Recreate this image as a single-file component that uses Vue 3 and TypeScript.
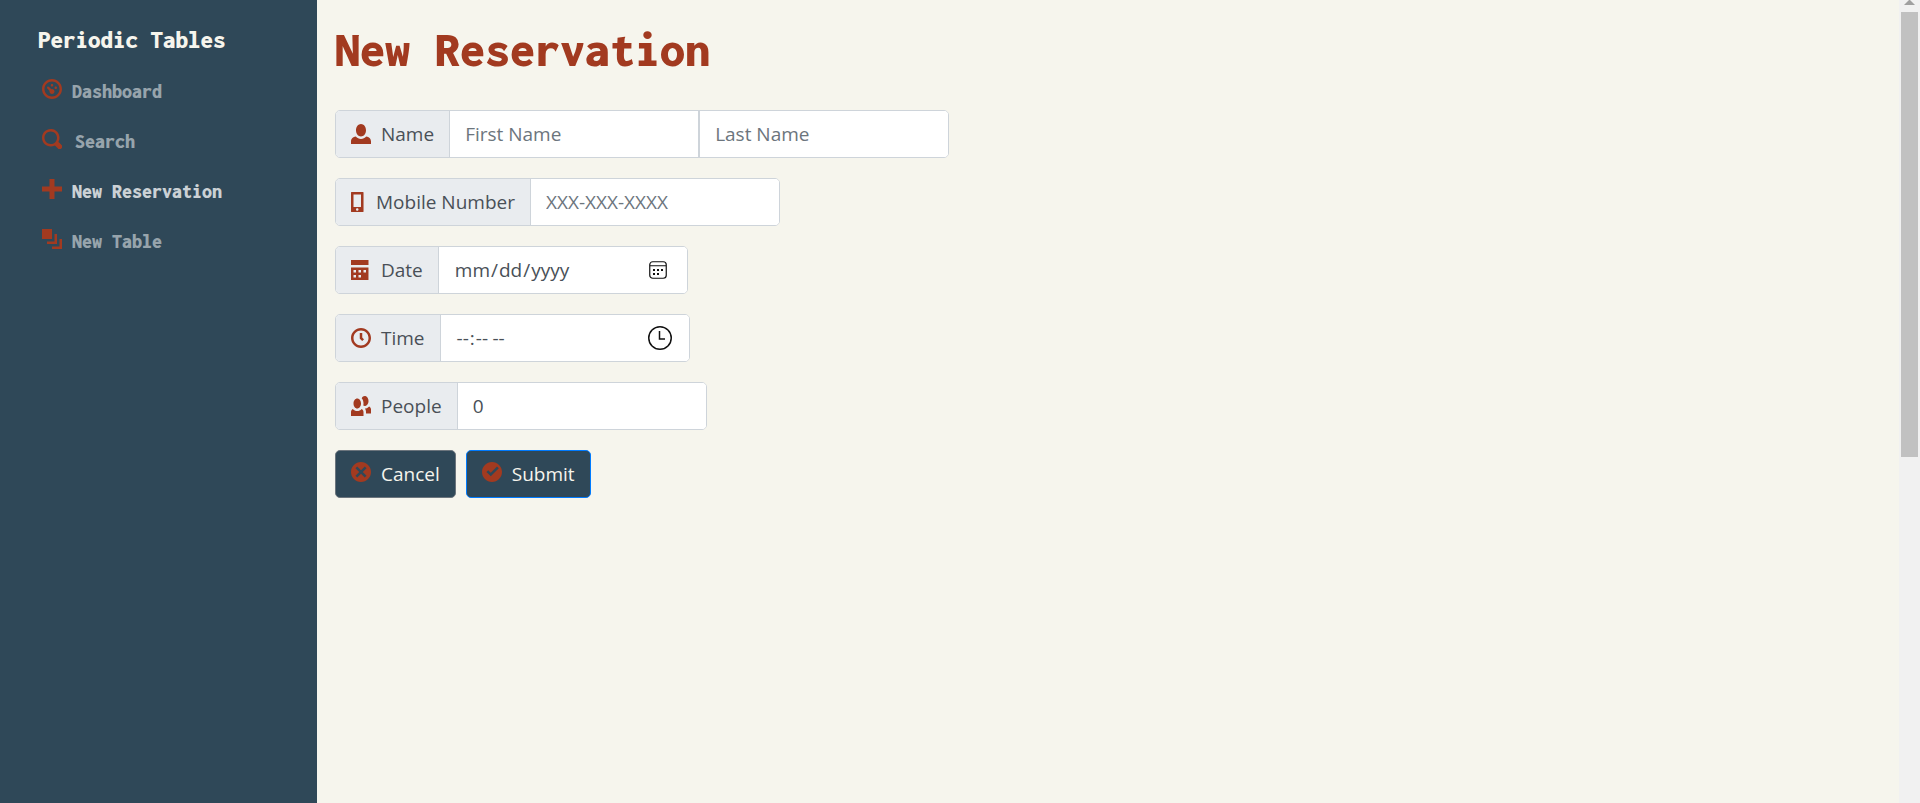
<script setup lang="ts">
import { ref } from 'vue'

type IconName =
  | 'dashboard' | 'search' | 'plus' | 'layers' | 'person' | 'phone'
  | 'calendar' | 'clock' | 'people' | 'cancel' | 'check'

const icons: Record<IconName, string> = {
  dashboard: 'M4 0c-2.2 0-4 1.8-4 4s1.8 4 4 4 4-1.8 4-4-1.8-4-4-4zm0 1c1.66 0 3 1.34 3 3s-1.34 3-3 3-3-1.34-3-3 1.34-3 3-3zm0 1c-.28 0-.5.22-.5.5s.22.5.5.5.5-.22.5-.5-.22-.5-.5-.5zm-1.66 1a.5.5 0 0 0-.19.84l.91.91c-.02.08-.06.16-.06.25 0 .55.45 1 1 1s1-.45 1-1-.45-1-1-1c-.09 0-.17.04-.25.06l-.91-.91a.5.5 0 0 0-.44-.16.5.5 0 0 0-.06 0zm3.16 0c-.28 0-.5.22-.5.5s.22.5.5.5.5-.22.5-.5-.22-.5-.5-.5z',
  search: 'M3.5 0c-1.93 0-3.5 1.57-3.5 3.5s1.57 3.5 3.5 3.5c.59 0 1.17-.14 1.66-.41a1 1 0 0 0 .13.13l1 1a1.02 1.02 0 1 0 1.44-1.44l-1-1a1 1 0 0 0-.16-.13c.27-.49.44-1.06.44-1.66 0-1.93-1.55-3.5-3.5-3.5zm0 1c1.39 0 2.5 1.11 2.5 2.5 0 .66-.24 1.27-.66 1.72-.01.01-.02.02-.03.03a1 1 0 0 0-.13.13c-.44.4-1.04.63-1.69.63-1.39 0-2.5-1.11-2.5-2.5s1.11-2.5 2.5-2.5z',
  plus: 'M3 0v3h-3v2h3v3h2v-3h3v-2h-3v-3h-2z',
  layers: 'M0 0v4h4v-4h-4zm5 2v3h-3v1h4v-4h-1zm2 2v3h-3v1h4v-4h-1z',
  person: 'M4 0c-1.1 0-2 1.12-2 2.5s.9 2.5 2 2.5 2-1.12 2-2.5-.9-2.5-2-2.5zm-2.09 5c-1.06.05-1.91.92-1.91 2v1h8v-1c0-1.08-.84-1.95-1.91-2-.54.61-1.28 1-2.09 1-.81 0-1.55-.39-2.09-1z',
  phone: 'M.19 0c-.11 0-.19.08-.19.19v7.63c0 .11.08.19.19.19h4.63c.11 0 .19-.08.19-.19v-7.63c0-.11-.08-.19-.19-.19h-4.63zm.81 1h3v5h-3v-5zm1.5 5.5c.28 0 .5.22.5.5s-.22.5-.5.5-.5-.22-.5-.5.22-.5.5-.5z',
  calendar: 'M0 0v2h7v-2h-7zm0 3v4.91c0 .05.04.09.09.09h6.81c.05 0 .09-.04.09-.09v-4.91h-7zm1 1h1v1h-1v-1zm2 0h1v1h-1v-1zm2 0h1v1h-1v-1zm-4 2h1v1h-1v-1zm2 0h1v1h-1v-1z',
  clock: 'M4 0c-2.2 0-4 1.8-4 4s1.8 4 4 4 4-1.8 4-4-1.8-4-4-4zm0 1c1.66 0 3 1.34 3 3s-1.34 3-3 3-3-1.34-3-3 1.34-3 3-3zm-.5 1v2.22l.16.13.5.5.34.38.72-.72-.38-.34-.34-.34v-1.81h-1z',
  people: 'M5.5 0c-.51 0-.95.35-1.22.88.45.54.72 1.28.72 2.13 0 .29-.03.55-.09.81.19.11.38.19.59.19.83 0 1.5-.9 1.5-2s-.67-2-1.5-2zm-3 1c-.83 0-1.5.9-1.5 2s.67 2 1.5 2 1.5-.9 1.5-2-.67-2-1.5-2zm4.75 3.16c-.43.51-1.02.82-1.69.84.27.38.44.84.44 1.34v.66h2v-1.66c0-.52-.31-.97-.75-1.19zm-6.5 1c-.44.22-.75.67-.75 1.19v1.66h5v-1.66c0-.52-.31-.97-.75-1.19-.45.53-1.06.84-1.75.84s-1.3-.32-1.75-.84z',
  cancel: 'M4 0c-2.21 0-4 1.79-4 4s1.79 4 4 4 4-1.79 4-4-1.79-4-4-4zm-1.5 1.78l1.5 1.5 1.5-1.5.72.72-1.5 1.5 1.5 1.5-.72.72-1.5-1.5-1.5 1.5-.72-.72 1.5-1.5-1.5-1.5.72-.72z',
  check: 'M4 0c-2.2 0-4 1.8-4 4s1.8 4 4 4 4-1.8 4-4-1.8-4-4-4zm2 1.78l.72.72-3.22 3.22-1.72-1.72.72-.72 1 1 2.5-2.5z',
}

interface NavItem { label: string; icon: IconName; active?: boolean; wide?: boolean }

const navItems: NavItem[] = [
  { label: 'Dashboard', icon: 'dashboard' },
  { label: 'Search', icon: 'search', wide: true },
  { label: 'New Reservation', icon: 'plus', active: true },
  { label: 'New Table', icon: 'layers' },
]

const firstName = ref('')
const lastName = ref('')
const mobile = ref('')
const date = ref('')
const time = ref('')
const people = ref('0')
</script>

<template>
  <div class="page">
    <nav class="sidebar">
      <a class="brand" href="#">Periodic Tables</a>
      <ul class="menu">
        <li v-for="item in navItems" :key="item.label">
          <a class="nav-link" :class="{ active: item.active, wide: item.wide }" href="#">
            <svg class="icon" viewBox="0 0 8 8" aria-hidden="true"><path :d="icons[item.icon]" /></svg>
            <span>{{ item.label }}</span>
          </a>
        </li>
      </ul>
    </nav>

    <main class="content">
      <h1>New Reservation</h1>
      <form class="form" @submit.prevent>
        <div class="group">
          <label class="tag" for="first-name">
            <svg class="icon" viewBox="0 0 8 8" aria-hidden="true"><path :d="icons.person" /></svg>
            Name
          </label>
          <input id="first-name" v-model="firstName" class="field" type="text" placeholder="First Name" />
          <input v-model="lastName" class="field" type="text" placeholder="Last Name" aria-label="Last Name" />
        </div>

        <div class="group">
          <label class="tag" for="mobile">
            <svg class="icon narrow" viewBox="0 0 6 8" aria-hidden="true"><path :d="icons.phone" /></svg>
            Mobile Number
          </label>
          <input id="mobile" v-model="mobile" class="field" type="tel" placeholder="XXX-XXX-XXXX" />
        </div>

        <div class="group">
          <label class="tag" for="date">
            <svg class="icon" viewBox="0 0 8 8" aria-hidden="true"><path :d="icons.calendar" /></svg>
            Date
          </label>
          <div class="field picker">
            <input id="date" v-model="date" type="date" />
            <svg class="picker-icon" viewBox="0 0 24 24" aria-hidden="true">
              <rect x="3.75" y="3.75" width="16.5" height="16.5" rx="3" fill="none" stroke="#111" stroke-width="1.2" />
              <path d="M4 7.75h16" stroke="#111" stroke-width="1.2" />
              <g fill="#111">
                <rect x="11" y="11" width="2" height="2" /><rect x="15" y="11" width="2" height="2" />
                <rect x="7" y="11" width="2" height="2" /><rect x="7" y="15" width="2" height="2" />
                <rect x="11" y="15" width="2" height="2" />
              </g>
            </svg>
          </div>
        </div>

        <div class="group">
          <label class="tag" for="time">
            <svg class="icon" viewBox="0 0 8 8" aria-hidden="true"><path :d="icons.clock" /></svg>
            Time
          </label>
          <div class="field picker">
            <input id="time" v-model="time" type="time" />
            <svg class="picker-icon" viewBox="0 0 24 24" aria-hidden="true">
              <circle cx="12" cy="12" r="11.25" fill="none" stroke="#111" stroke-width="1.5" />
              <path d="M11.5 5v8H17" fill="none" stroke="#111" stroke-width="1.5" />
            </svg>
          </div>
        </div>

        <div class="group">
          <label class="tag" for="people">
            <svg class="icon" viewBox="0 0 8 8" aria-hidden="true"><path :d="icons.people" /></svg>
            People
          </label>
          <input id="people" v-model="people" class="field" type="text" inputmode="numeric" />
        </div>

        <div class="actions">
          <button class="btn" type="button">
            <svg class="icon" viewBox="0 0 8 8" aria-hidden="true"><path :d="icons.cancel" /></svg>
            Cancel
          </button>
          <button class="btn primary" type="submit">
            <svg class="icon" viewBox="0 0 8 8" aria-hidden="true"><path :d="icons.check" /></svg>
            Submit
          </button>
        </div>
      </form>
    </main>

    <div class="scrollbar" aria-hidden="true">
      <svg class="arrow" viewBox="0 0 17 12"><path d="M8 0h1l5 5H3z" fill="#a0a0a0" /></svg>
      <div class="thumb"></div>
    </div>
  </div>
</template>

<style>
body {
  margin: 0;
  background: #f6f5ed;
}
</style>

<style scoped>
* {
  box-sizing: border-box;
}

.page {
  display: flex;
  min-height: 100vh;
  font: 19px/30px "Segoe UI", "Open Sans", "Noto Sans", sans-serif;
  color: #495057;
  background: #f6f5ed;
}

.icon {
  flex: none;
  width: 20px;
  height: 20px;
  fill: #a23a20;
}

.icon.narrow {
  width: 15px;
}

.sidebar {
  flex: 0 0 317px;
  padding: 22px 38px;
  background: #2f4858;
  font-family: Inconsolata, "DejaVu Sans Mono", monospace;
  font-weight: 900;
}

.brand {
  display: block;
  margin-bottom: 14px;
  font-size: 25px;
  line-height: 36px;
  color: #f6f5ed;
  text-decoration: none;
}

.menu {
  margin: 0;
  padding: 0;
  list-style: none;
}

.nav-link {
  display: flex;
  gap: 10px;
  height: 50px;
  padding: 7px 4px;
  font-size: 20px;
  line-height: 26px;
  color: #97a4ac;
  text-decoration: none;
}

.nav-link.wide {
  gap: 13px;
}

.nav-link.active {
  color: #cbd1d5;
}

.content {
  flex: 1;
  min-width: 0;
  padding: 20px 18px;
}

h1 {
  margin: 0 0 30px;
  font: 900 50px/60px Inconsolata, "DejaVu Sans Mono", monospace;
  color: #a23a20;
}

.form {
  display: flex;
  flex-direction: column;
  align-items: flex-start;
  gap: 20px;
}

.group {
  display: flex;
  height: 48px;
  border: 1px solid #ced4da;
  border-radius: 5px;
  background: #fff;
  overflow: hidden;
}

.tag {
  display: flex;
  align-items: center;
  gap: 10px;
  padding: 0 15px;
  background: #e9ecef;
  white-space: nowrap;
}

.field {
  width: 249px;
  padding: 0 15px;
  border: 0;
  border-left: 1px solid #ced4da;
  border-radius: 0;
  background: #fff;
  color: #495057;
  font: inherit;
  outline: none;
}

.field + .field {
  width: 250px;
  border-left-width: 2px;
}

.field::placeholder {
  color: #6c757d;
  opacity: 1;
}

.picker {
  display: flex;
  align-items: center;
  justify-content: space-between;
  padding-right: 17px;
}

.picker input {
  flex: 1;
  min-width: 0;
  padding: 0;
  border: 0;
  background: transparent;
  color: inherit;
  font: inherit;
  outline: none;
}

.picker input::-webkit-calendar-picker-indicator {
  display: none;
}

.picker-icon {
  flex: none;
  width: 24px;
  height: 24px;
}

.actions {
  display: flex;
  gap: 10px;
}

.btn {
  display: flex;
  align-items: center;
  gap: 10px;
  height: 48px;
  padding: 0 15px;
  border: 1px solid #6c757d;
  border-radius: 5px;
  background: #2f4858;
  color: #f6f5ed;
  font: inherit;
  cursor: pointer;
}

.btn .icon {
  margin-bottom: 4px;
}

.btn.primary {
  border-color: #007bff;
}

.scrollbar {
  flex: 0 0 21px;
  padding: 0 2px;
  background: #f1f1f1;
}

.arrow {
  display: block;
  width: 17px;
  height: 12px;
}

.thumb {
  height: 445px;
  background: #c1c1c1;
}
</style>
